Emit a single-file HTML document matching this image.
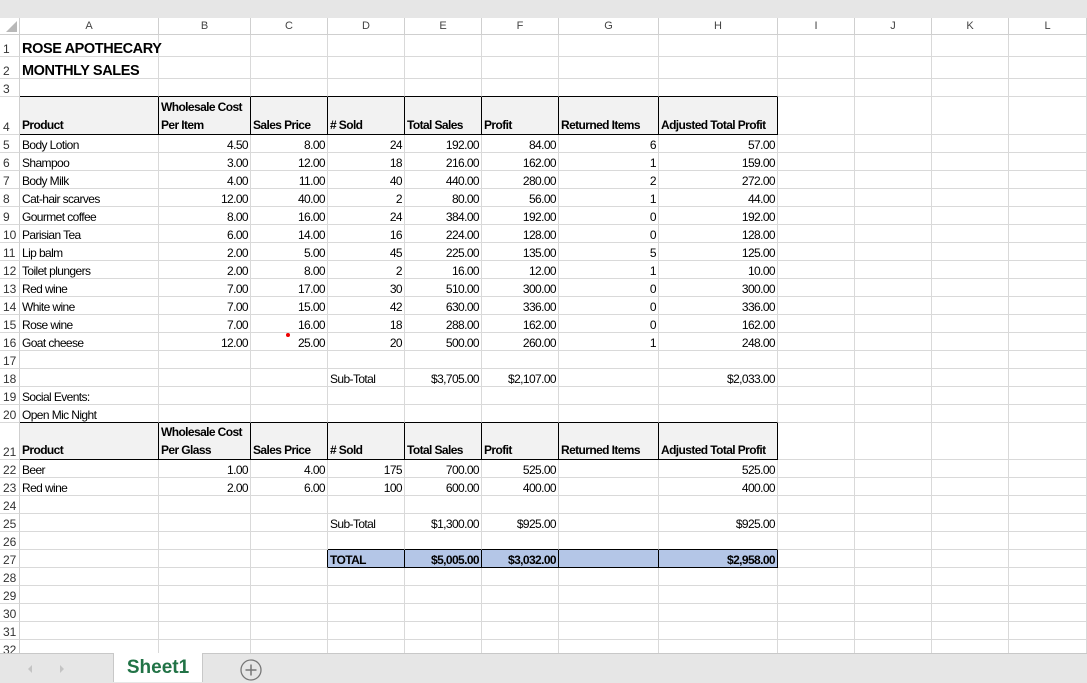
<!DOCTYPE html>
<html><head><style>
body{margin:0;width:1087px;height:682px;overflow:hidden;background:#fff;font-family:"Liberation Sans",Arial,sans-serif;position:relative}
#top{position:absolute;left:0;top:0;width:1087px;height:18px;background:#e6e6e6;border-bottom:1px solid #d0d0d0}
table{position:absolute;left:0;top:18px;width:1087px;border-collapse:separate;border-spacing:0;table-layout:fixed}
td{border-right:1px solid #d9d9d9;border-bottom:1px solid #d9d9d9;padding:0 2px;height:17px;font-size:12px;letter-spacing:-0.6px;white-space:nowrap;overflow:visible;vertical-align:bottom;line-height:14px;color:#000;box-sizing:border-box}
tr.h td{background:#fff;text-align:center;color:#444;font-size:11px;letter-spacing:0;vertical-align:middle;border-color:#cfcfcf}
td.rh{background:#fff;text-align:left;color:#333;padding-left:3px;font-size:12px;letter-spacing:0;border-right:1px solid #cfcfcf}
.r{text-align:right}
tr.t td.c{font-size:14.5px;font-weight:bold;letter-spacing:-0.4px}
tr.hd td.d{background:#f2f2f2;font-weight:bold;border-right:1px solid #000;border-bottom:1px solid #000;line-height:18px}
tr.pre td.d{border-bottom:1px solid #000}
td.tot{background:#b4c6e7;font-weight:bold;border-right:1px solid #000;border-bottom:1px solid #000}
td.totl{border-right:1px solid #000}
tr.pre27 td.d{border-bottom:1px solid #000}
#bar{position:absolute;left:0;top:653px;width:1087px;height:29px;background:#e6e6e6;border-top:1px solid #c8c8c8}
#tab{position:absolute;left:113px;top:653px;width:88px;height:29px;background:#fff;border-left:1px solid #c8c8c8;border-right:1px solid #c8c8c8;color:#217346;font-weight:bold;font-size:19px;text-align:center;line-height:29px}
</style></head><body>
<div id="top"></div>
<table>
<colgroup><col style="width:20px"><col style="width:139px"><col style="width:92px"><col style="width:77px"><col style="width:77px"><col style="width:77px"><col style="width:77px"><col style="width:100px"><col style="width:119px"><col style="width:77px"><col style="width:77px"><col style="width:77px"><col style="width:78px"></colgroup>
<tr class="h"><td style="background:#fff"></td><td>A</td><td>B</td><td>C</td><td>D</td><td>E</td><td>F</td><td>G</td><td>H</td><td>I</td><td>J</td><td>K</td><td>L</td></tr>
<tr class="t" style="height:22px"><td class="rh">1</td><td class="c">ROSE APOTHECARY</td><td></td><td></td><td></td><td></td><td></td><td></td><td></td><td></td><td></td><td></td><td></td></tr>
<tr class="t" style="height:22px"><td class="rh">2</td><td class="c">MONTHLY SALES</td><td></td><td></td><td></td><td></td><td></td><td></td><td></td><td></td><td></td><td></td><td></td></tr>
<tr class="pre" style="height:18px"><td class="rh">3</td><td class="d"></td><td class="d"></td><td class="d"></td><td class="d"></td><td class="d"></td><td class="d"></td><td class="d"></td><td class="d"></td><td></td><td></td><td></td><td></td></tr>
<tr class="hd" style="height:38px"><td class="rh">4</td><td class="d">Product</td><td class="d">Wholesale Cost<br>Per Item</td><td class="d">Sales Price</td><td class="d"># Sold</td><td class="d">Total Sales</td><td class="d">Profit</td><td class="d">Returned Items</td><td class="d">Adjusted Total Profit</td><td></td><td></td><td></td><td></td></tr>
<tr style="height:18px"><td class="rh">5</td><td>Body Lotion</td><td class="r">4.50</td><td class="r">8.00</td><td class="r">24</td><td class="r">192.00</td><td class="r">84.00</td><td class="r">6</td><td class="r">57.00</td><td></td><td></td><td></td><td></td></tr>
<tr style="height:18px"><td class="rh">6</td><td>Shampoo</td><td class="r">3.00</td><td class="r">12.00</td><td class="r">18</td><td class="r">216.00</td><td class="r">162.00</td><td class="r">1</td><td class="r">159.00</td><td></td><td></td><td></td><td></td></tr>
<tr style="height:18px"><td class="rh">7</td><td>Body Milk</td><td class="r">4.00</td><td class="r">11.00</td><td class="r">40</td><td class="r">440.00</td><td class="r">280.00</td><td class="r">2</td><td class="r">272.00</td><td></td><td></td><td></td><td></td></tr>
<tr style="height:18px"><td class="rh">8</td><td>Cat-hair scarves</td><td class="r">12.00</td><td class="r">40.00</td><td class="r">2</td><td class="r">80.00</td><td class="r">56.00</td><td class="r">1</td><td class="r">44.00</td><td></td><td></td><td></td><td></td></tr>
<tr style="height:18px"><td class="rh">9</td><td>Gourmet coffee</td><td class="r">8.00</td><td class="r">16.00</td><td class="r">24</td><td class="r">384.00</td><td class="r">192.00</td><td class="r">0</td><td class="r">192.00</td><td></td><td></td><td></td><td></td></tr>
<tr style="height:18px"><td class="rh">10</td><td>Parisian Tea</td><td class="r">6.00</td><td class="r">14.00</td><td class="r">16</td><td class="r">224.00</td><td class="r">128.00</td><td class="r">0</td><td class="r">128.00</td><td></td><td></td><td></td><td></td></tr>
<tr style="height:18px"><td class="rh">11</td><td>Lip balm</td><td class="r">2.00</td><td class="r">5.00</td><td class="r">45</td><td class="r">225.00</td><td class="r">135.00</td><td class="r">5</td><td class="r">125.00</td><td></td><td></td><td></td><td></td></tr>
<tr style="height:18px"><td class="rh">12</td><td>Toilet plungers</td><td class="r">2.00</td><td class="r">8.00</td><td class="r">2</td><td class="r">16.00</td><td class="r">12.00</td><td class="r">1</td><td class="r">10.00</td><td></td><td></td><td></td><td></td></tr>
<tr style="height:18px"><td class="rh">13</td><td>Red wine</td><td class="r">7.00</td><td class="r">17.00</td><td class="r">30</td><td class="r">510.00</td><td class="r">300.00</td><td class="r">0</td><td class="r">300.00</td><td></td><td></td><td></td><td></td></tr>
<tr style="height:18px"><td class="rh">14</td><td>White wine</td><td class="r">7.00</td><td class="r">15.00</td><td class="r">42</td><td class="r">630.00</td><td class="r">336.00</td><td class="r">0</td><td class="r">336.00</td><td></td><td></td><td></td><td></td></tr>
<tr style="height:18px"><td class="rh">15</td><td>Rose wine</td><td class="r">7.00</td><td class="r">16.00</td><td class="r">18</td><td class="r">288.00</td><td class="r">162.00</td><td class="r">0</td><td class="r">162.00</td><td></td><td></td><td></td><td></td></tr>
<tr style="height:18px"><td class="rh">16</td><td>Goat cheese</td><td class="r">12.00</td><td class="r">25.00</td><td class="r">20</td><td class="r">500.00</td><td class="r">260.00</td><td class="r">1</td><td class="r">248.00</td><td></td><td></td><td></td><td></td></tr>
<tr style="height:18px"><td class="rh">17</td><td></td><td></td><td></td><td></td><td></td><td></td><td></td><td></td><td></td><td></td><td></td><td></td></tr>
<tr style="height:18px"><td class="rh">18</td><td></td><td></td><td></td><td>Sub-Total</td><td class="r">$3,705.00</td><td class="r">$2,107.00</td><td></td><td class="r">$2,033.00</td><td></td><td></td><td></td><td></td></tr>
<tr style="height:18px"><td class="rh">19</td><td>Social Events:</td><td></td><td></td><td></td><td></td><td></td><td></td><td></td><td></td><td></td><td></td><td></td></tr>
<tr class="pre" style="height:18px"><td class="rh">20</td><td class="d">Open Mic Night</td><td class="d"></td><td class="d"></td><td class="d"></td><td class="d"></td><td class="d"></td><td class="d"></td><td class="d"></td><td></td><td></td><td></td><td></td></tr>
<tr class="hd" style="height:37px"><td class="rh">21</td><td class="d">Product</td><td class="d">Wholesale Cost<br>Per Glass</td><td class="d">Sales Price</td><td class="d"># Sold</td><td class="d">Total Sales</td><td class="d">Profit</td><td class="d">Returned Items</td><td class="d">Adjusted Total Profit</td><td></td><td></td><td></td><td></td></tr>
<tr style="height:18px"><td class="rh">22</td><td>Beer</td><td class="r">1.00</td><td class="r">4.00</td><td class="r">175</td><td class="r">700.00</td><td class="r">525.00</td><td></td><td class="r">525.00</td><td></td><td></td><td></td><td></td></tr>
<tr style="height:18px"><td class="rh">23</td><td>Red wine</td><td class="r">2.00</td><td class="r">6.00</td><td class="r">100</td><td class="r">600.00</td><td class="r">400.00</td><td></td><td class="r">400.00</td><td></td><td></td><td></td><td></td></tr>
<tr style="height:18px"><td class="rh">24</td><td></td><td></td><td></td><td></td><td></td><td></td><td></td><td></td><td></td><td></td><td></td><td></td></tr>
<tr style="height:18px"><td class="rh">25</td><td></td><td></td><td></td><td>Sub-Total</td><td class="r">$1,300.00</td><td class="r">$925.00</td><td></td><td class="r">$925.00</td><td></td><td></td><td></td><td></td></tr>
<tr class="pre27" style="height:18px"><td class="rh">26</td><td></td><td></td><td></td><td class="d"></td><td class="d"></td><td class="d"></td><td class="d"></td><td class="d"></td><td></td><td></td><td></td><td></td></tr>
<tr style="height:18px"><td class="rh">27</td><td></td><td></td><td class="totl"></td><td class="tot">TOTAL</td><td class="tot r">$5,005.00</td><td class="tot r">$3,032.00</td><td class="tot"></td><td class="tot r">$2,958.00</td><td></td><td></td><td></td><td></td></tr>
<tr style="height:18px"><td class="rh">28</td><td></td><td></td><td></td><td></td><td></td><td></td><td></td><td></td><td></td><td></td><td></td><td></td></tr>
<tr style="height:18px"><td class="rh">29</td><td></td><td></td><td></td><td></td><td></td><td></td><td></td><td></td><td></td><td></td><td></td><td></td></tr>
<tr style="height:18px"><td class="rh">30</td><td></td><td></td><td></td><td></td><td></td><td></td><td></td><td></td><td></td><td></td><td></td><td></td></tr>
<tr style="height:18px"><td class="rh">31</td><td></td><td></td><td></td><td></td><td></td><td></td><td></td><td></td><td></td><td></td><td></td><td></td></tr>
<tr style="height:18px"><td class="rh">32</td><td></td><td></td><td></td><td></td><td></td><td></td><td></td><td></td><td></td><td></td><td></td><td></td></tr>
</table>
<div style="position:absolute;left:286px;top:333px;width:4px;height:4px;border-radius:2px;background:#e00"></div>
<svg style="position:absolute;left:0;top:0" width="20" height="35"><polygon points="17,21 17,32 6,32" fill="#b8b8b8"/></svg>
<div id="bar"></div>
<div id="tab">Sheet1</div>
<svg style="position:absolute;left:20px;top:660px" width="60" height="18"><polygon points="12,5 8,9 12,13" fill="#c4c4c4"/><polygon points="40,5 44,9 40,13" fill="#c4c4c4"/></svg>
<svg style="position:absolute;left:239px;top:658px" width="26" height="24"><circle cx="12" cy="12" r="10" fill="none" stroke="#777" stroke-width="1.3"/><path d="M12 6.5V17.5M6.5 12H17.5" stroke="#777" stroke-width="1.5"/></svg>
</body></html>
